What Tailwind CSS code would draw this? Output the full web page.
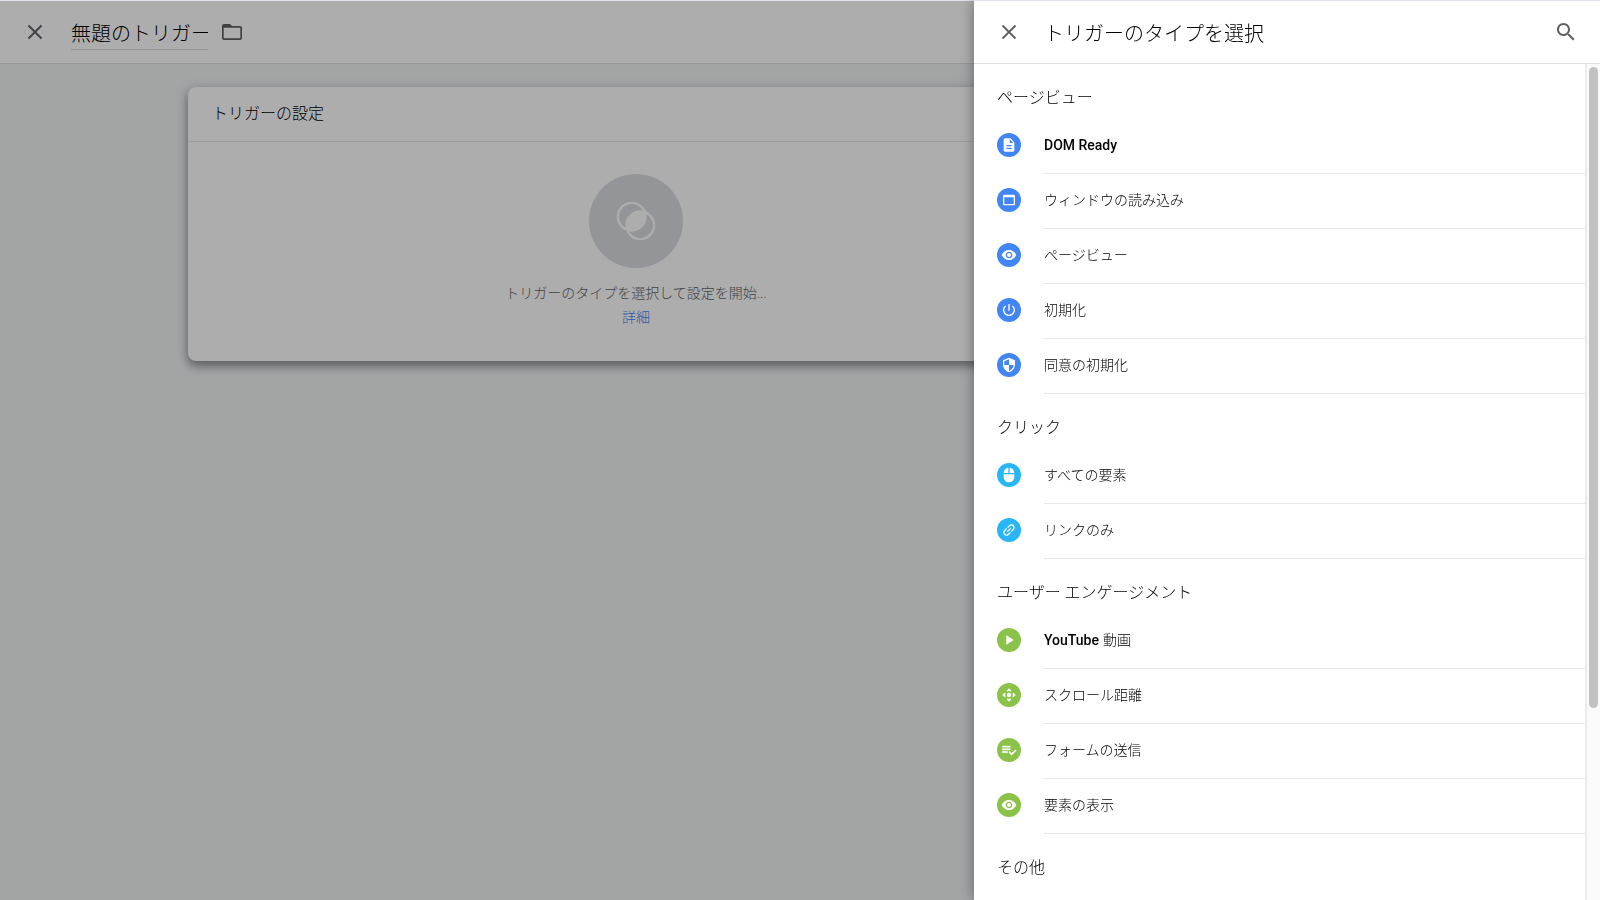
<!DOCTYPE html>
<html lang="ja">
<head>
<meta charset="utf-8">
<title>無題のトリガー</title>
<meta name="viewport" content="width=device-width, initial-scale=1">
<script src="https://cdn.jsdelivr.net/npm/@tailwindcss/browser@4"></script>
</head>
<body class="h-screen overflow-hidden bg-[#f1f3f4] font-[Roboto,'Noto_Sans_CJK_JP',sans-serif] font-light text-black">
<svg class="hidden">
  <symbol id="doc" viewBox="0 0 24 24"><path d="M14 2H6c-1.100 0-2 .9-2 2v16c0 1.100.9 2 2 2h12c1.100 0 2-.9 2-2V8l-6-6zm2 16H8v-2h8v2zm0-4H8v-2h8v2zm-3-5V3.500L18.500 9H13z"/></symbol>
  <symbol id="window" viewBox="0 0 24 24"><path d="M19 4H5c-1.110 0-2 .9-2 2v12c0 1.100.89 2 2 2h14c1.100 0 2-.9 2-2V6c0-1.100-.9-2-2-2zm0 14H5V8h14v10z"/></symbol>
  <symbol id="eye" viewBox="0 0 24 24"><path d="M12 4.500C7 4.500 2.730 7.610 1 12c1.730 4.390 6 7.500 11 7.500s9.270-3.110 11-7.500c-1.730-4.390-6-7.500-11-7.500zM12 17c-2.760 0-5-2.240-5-5s2.240-5 5-5 5 2.240 5 5-2.240 5-5 5zm0-8c-1.660 0-3 1.340-3 3s1.340 3 3 3 3-1.340 3-3-1.340-3-3-3z"/></symbol>
  <symbol id="power" viewBox="0 0 24 24"><path d="M13 3h-2v10h2V3zm4.830 2.170l-1.420 1.420C17.990 7.860 19 9.810 19 12c0 3.870-3.130 7-7 7s-7-3.130-7-7c0-2.190 1.010-4.140 2.580-5.420L6.170 5.170C4.230 6.820 3 9.260 3 12c0 4.970 4.030 9 9 9s9-4.030 9-9c0-2.740-1.230-5.180-3.170-6.830z"/></symbol>
  <symbol id="shield" viewBox="0 0 24 24"><path d="M12 1L3 5v6c0 5.550 3.840 10.740 9 12 5.160-1.260 9-6.450 9-12V5l-9-4zm0 10.990h7c-.53 4.120-3.280 7.790-7 8.940V12H5V6.300l7-3.110v8.800z"/></symbol>
  <symbol id="mouse" viewBox="0 0 24 24"><path d="M13 1.070V9h7c0-4.080-3.050-7.440-7-7.930zM4 15c0 4.420 3.580 8 8 8s8-3.580 8-8v-4H4v4zm7-13.930C7.050 1.560 4 4.920 4 9h7V1.070z"/></symbol>
  <symbol id="link" viewBox="0 0 24 24"><path transform="rotate(-45 12 12)" d="M3.900 12c0-1.710 1.390-3.100 3.100-3.100h4V7H7c-2.760 0-5 2.240-5 5s2.240 5 5 5h4v-1.900H7c-1.710 0-3.100-1.390-3.100-3.100zM8 13h8v-2H8v2zm9-6h-4v1.900h4c1.710 0 3.100 1.390 3.100 3.100s-1.390 3.100-3.100 3.100h-4V17h4c2.760 0 5-2.240 5-5s-2.240-5-5-5z"/></symbol>
  <symbol id="play" viewBox="0 0 24 24"><path d="M8 5v14l11-7z"/></symbol>
  <symbol id="scroll" viewBox="0 0 24 24"><path d="M15.540 5.540L13.770 7.300 12 5.540 10.230 7.300 8.460 5.540 12 2zm2.920 10l-1.760-1.770L18.460 12l-1.760-1.770 1.760-1.770L22 12zm-10 2.920l1.770-1.760L12 18.460l1.770-1.760 1.770 1.760L12 22zm-2.920-10l1.760 1.770L5.540 12l1.760 1.770-1.760 1.770L2 12z"/><circle cx="12" cy="12" r="3.300"/></symbol>
  <symbol id="form" viewBox="0 0 24 24"><path d="M14 10H2v2h12v-2zm0-4H2v2h12V6zM2 16h8v-2H2v2zm19.500-4.500L23 13l-6.990 7-4.510-4.500L13 14l3.010 3 5.490-5.500z" stroke="currentColor" stroke-width=".5"/></symbol>
  <symbol id="close" viewBox="0 0 24 24"><path d="M5.500 5.500l13 13M18.500 5.500l-13 13" fill="none" stroke="currentColor" stroke-width="1.900"/></symbol>
</svg>

<div class="flex h-full flex-col">
  <header class="flex h-16 shrink-0 items-center border-t border-b border-t-[#e6e0ef] border-b-[#e0e0e0] bg-white pl-[23px]">
    <button type="button" aria-label="閉じる" class="text-[#5f6368]"><svg class="size-6 fill-current"><use href="#close"/></svg></button>
    <input type="text" aria-label="トリガー名" value="無題のトリガー" class="ml-6 h-9 w-[137px] border-b border-[#dadce0] bg-transparent pt-[2px] text-xl font-light outline-none">
    <button type="button" aria-label="フォルダ" class="ml-3 text-[#616161]"><svg class="size-6 fill-current" viewBox="0 0 24 24"><path d="M20 6h-8l-2-2H4c-1.100 0-2 .9-2 2v12c0 1.100.9 2 2 2h16c1.100 0 2-.9 2-2V8c0-1.100-.9-2-2-2zm.3 12.300H3.700V7.700h16.600z"/></svg></button>
  </header>
  <main class="flex-1 pt-[23px] pl-[188px]">
    <section class="w-[896px] rounded-lg bg-white shadow-[0_3px_14px_rgba(60,64,80,0.3),0_5px_8px_rgba(0,0,0,0.3)]">
      <h2 class="flex h-[55px] items-center border-b border-[#e8e8e8] px-6 text-base">トリガーの設定</h2>
      <div class="flex flex-col items-center pt-8 pb-8 text-sm/6 text-[#5f6368]">
        <div class="mb-[13px] grid size-[94px] place-items-center rounded-full bg-[#dadce0]">
          <svg class="size-10" viewBox="0 0 40 40" fill="none" stroke="#fff" stroke-width="2.400"><circle cx="15.700" cy="15.700" r="13.800"/><circle cx="24.300" cy="24.300" r="13.800"/><path d="M28.900 11.100A14 14 0 0 1 11.100 28.900A14 14 0 0 1 28.900 11.100z" fill="#fff" stroke="none"/></svg>
        </div>
        <p>トリガーのタイプを選択して設定を開始...</p>
        <a href="#" class="text-[#4285f4]">詳細</a>
      </div>
    </section>
  </main>
</div>

<div class="fixed inset-x-0 top-px bottom-0 bg-black/32"></div>

<aside class="fixed inset-y-0 right-0 flex w-[626px] flex-col bg-white shadow-[0_0_14px_rgba(0,0,0,0.4)]">
  <header class="flex h-16 shrink-0 items-center border-t border-b border-t-[#e6e0ef] border-b-[#e0e0e0] pr-[22px] pl-[23px]">
    <button type="button" aria-label="閉じる" class="text-[#616161]"><svg class="size-6 fill-current"><use href="#close"/></svg></button>
    <h1 class="ml-[23px] flex-1 pt-[3px] text-xl">トリガーのタイプを選択</h1>
    <button type="button" aria-label="検索" class="text-[#616161]"><svg class="size-6 fill-current" viewBox="0 0 24 24"><path d="M15.500 14h-.79l-.28-.27C15.410 12.590 16 11.110 16 9.500 16 5.910 13.090 3 9.500 3S3 5.910 3 9.500 5.910 16 9.500 16c1.610 0 3.090-.59 4.230-1.570l.27.28v.79l5 4.990L20.490 19l-4.990-5zm-6 0C7.010 14 5 11.990 5 9.500S7.010 5 9.500 5 14 7.010 14 9.500 11.990 14 9.500 14z"/></svg></button>
  </header>
  <div class="flex min-h-0 flex-1">
    <div class="flex-1 overflow-hidden pl-[23px] text-sm">
      <h3 class="flex h-[55px] items-center pt-3 text-base">ページビュー</h3>
      <ul>
        <li><button type="button" class="flex h-[55px] w-full items-center gap-[23px] text-left"><span class="mb-[3px] grid size-6 place-items-center rounded-full bg-[#4285f4] text-white"><svg class="size-4 fill-current"><use href="#doc"/></svg></span><span class="flex h-full flex-1 items-center border-b border-[#e8e8e8] pb-[3px] font-medium">DOM Ready</span></button></li>
        <li><button type="button" class="flex h-[55px] w-full items-center gap-[23px] text-left"><span class="mb-[3px] grid size-6 place-items-center rounded-full bg-[#4285f4] text-white"><svg class="size-4 fill-current"><use href="#window"/></svg></span><span class="flex h-full flex-1 items-center border-b border-[#e8e8e8] pb-[3px]">ウィンドウの読み込み</span></button></li>
        <li><button type="button" class="flex h-[55px] w-full items-center gap-[23px] text-left"><span class="mb-[3px] grid size-6 place-items-center rounded-full bg-[#4285f4] text-white"><svg class="size-4 fill-current"><use href="#eye"/></svg></span><span class="flex h-full flex-1 items-center border-b border-[#e8e8e8] pb-[3px]">ページビュー</span></button></li>
        <li><button type="button" class="flex h-[55px] w-full items-center gap-[23px] text-left"><span class="mb-[3px] grid size-6 place-items-center rounded-full bg-[#4285f4] text-white"><svg class="size-4 fill-current"><use href="#power"/></svg></span><span class="flex h-full flex-1 items-center border-b border-[#e8e8e8] pb-[3px]">初期化</span></button></li>
        <li><button type="button" class="flex h-[55px] w-full items-center gap-[23px] text-left"><span class="mb-[3px] grid size-6 place-items-center rounded-full bg-[#4285f4] text-white"><svg class="size-4 fill-current"><use href="#shield"/></svg></span><span class="flex h-full flex-1 items-center border-b border-[#e8e8e8] pb-[3px]">同意の初期化</span></button></li>
      </ul>
      <h3 class="flex h-[55px] items-center pt-3 text-base">クリック</h3>
      <ul>
        <li><button type="button" class="flex h-[55px] w-full items-center gap-[23px] text-left"><span class="mb-[3px] grid size-6 place-items-center rounded-full bg-[#29b6f6] text-white"><svg class="size-4 fill-current"><use href="#mouse"/></svg></span><span class="flex h-full flex-1 items-center border-b border-[#e8e8e8] pb-[3px]">すべての要素</span></button></li>
        <li><button type="button" class="flex h-[55px] w-full items-center gap-[23px] text-left"><span class="mb-[3px] grid size-6 place-items-center rounded-full bg-[#29b6f6] text-white"><svg class="size-4 fill-current"><use href="#link"/></svg></span><span class="flex h-full flex-1 items-center border-b border-[#e8e8e8] pb-[3px]">リンクのみ</span></button></li>
      </ul>
      <h3 class="flex h-[55px] items-center pt-3 text-base">ユーザー エンゲージメント</h3>
      <ul>
        <li><button type="button" class="flex h-[55px] w-full items-center gap-[23px] text-left"><span class="mb-[3px] grid size-6 place-items-center rounded-full bg-[#8bc34a] text-white"><svg class="size-4 fill-current"><use href="#play"/></svg></span><span class="flex h-full flex-1 items-center gap-1 border-b border-[#e8e8e8] pb-[3px]"><span class="font-medium">YouTube</span> 動画</span></button></li>
        <li><button type="button" class="flex h-[55px] w-full items-center gap-[23px] text-left"><span class="mb-[3px] grid size-6 place-items-center rounded-full bg-[#8bc34a] text-white"><svg class="size-4 fill-current"><use href="#scroll"/></svg></span><span class="flex h-full flex-1 items-center border-b border-[#e8e8e8] pb-[3px]">スクロール距離</span></button></li>
        <li><button type="button" class="flex h-[55px] w-full items-center gap-[23px] text-left"><span class="mb-[3px] grid size-6 place-items-center rounded-full bg-[#8bc34a] text-white"><svg class="size-4 fill-current"><use href="#form"/></svg></span><span class="flex h-full flex-1 items-center border-b border-[#e8e8e8] pb-[3px]">フォームの送信</span></button></li>
        <li><button type="button" class="flex h-[55px] w-full items-center gap-[23px] text-left"><span class="mb-[3px] grid size-6 place-items-center rounded-full bg-[#8bc34a] text-white"><svg class="size-4 fill-current"><use href="#eye"/></svg></span><span class="flex h-full flex-1 items-center border-b border-[#e8e8e8] pb-[3px]">要素の表示</span></button></li>
      </ul>
      <h3 class="flex h-[55px] items-center pt-3 text-base">その他</h3>
    </div>
    <div class="w-[15px] border-l-2 border-[#ececec] bg-[#fafafa] px-[2px] pt-[3px]"><div class="h-[77%] rounded-full bg-[#c1c1c1]"></div></div>
  </div>
</aside>
</body>
</html>
